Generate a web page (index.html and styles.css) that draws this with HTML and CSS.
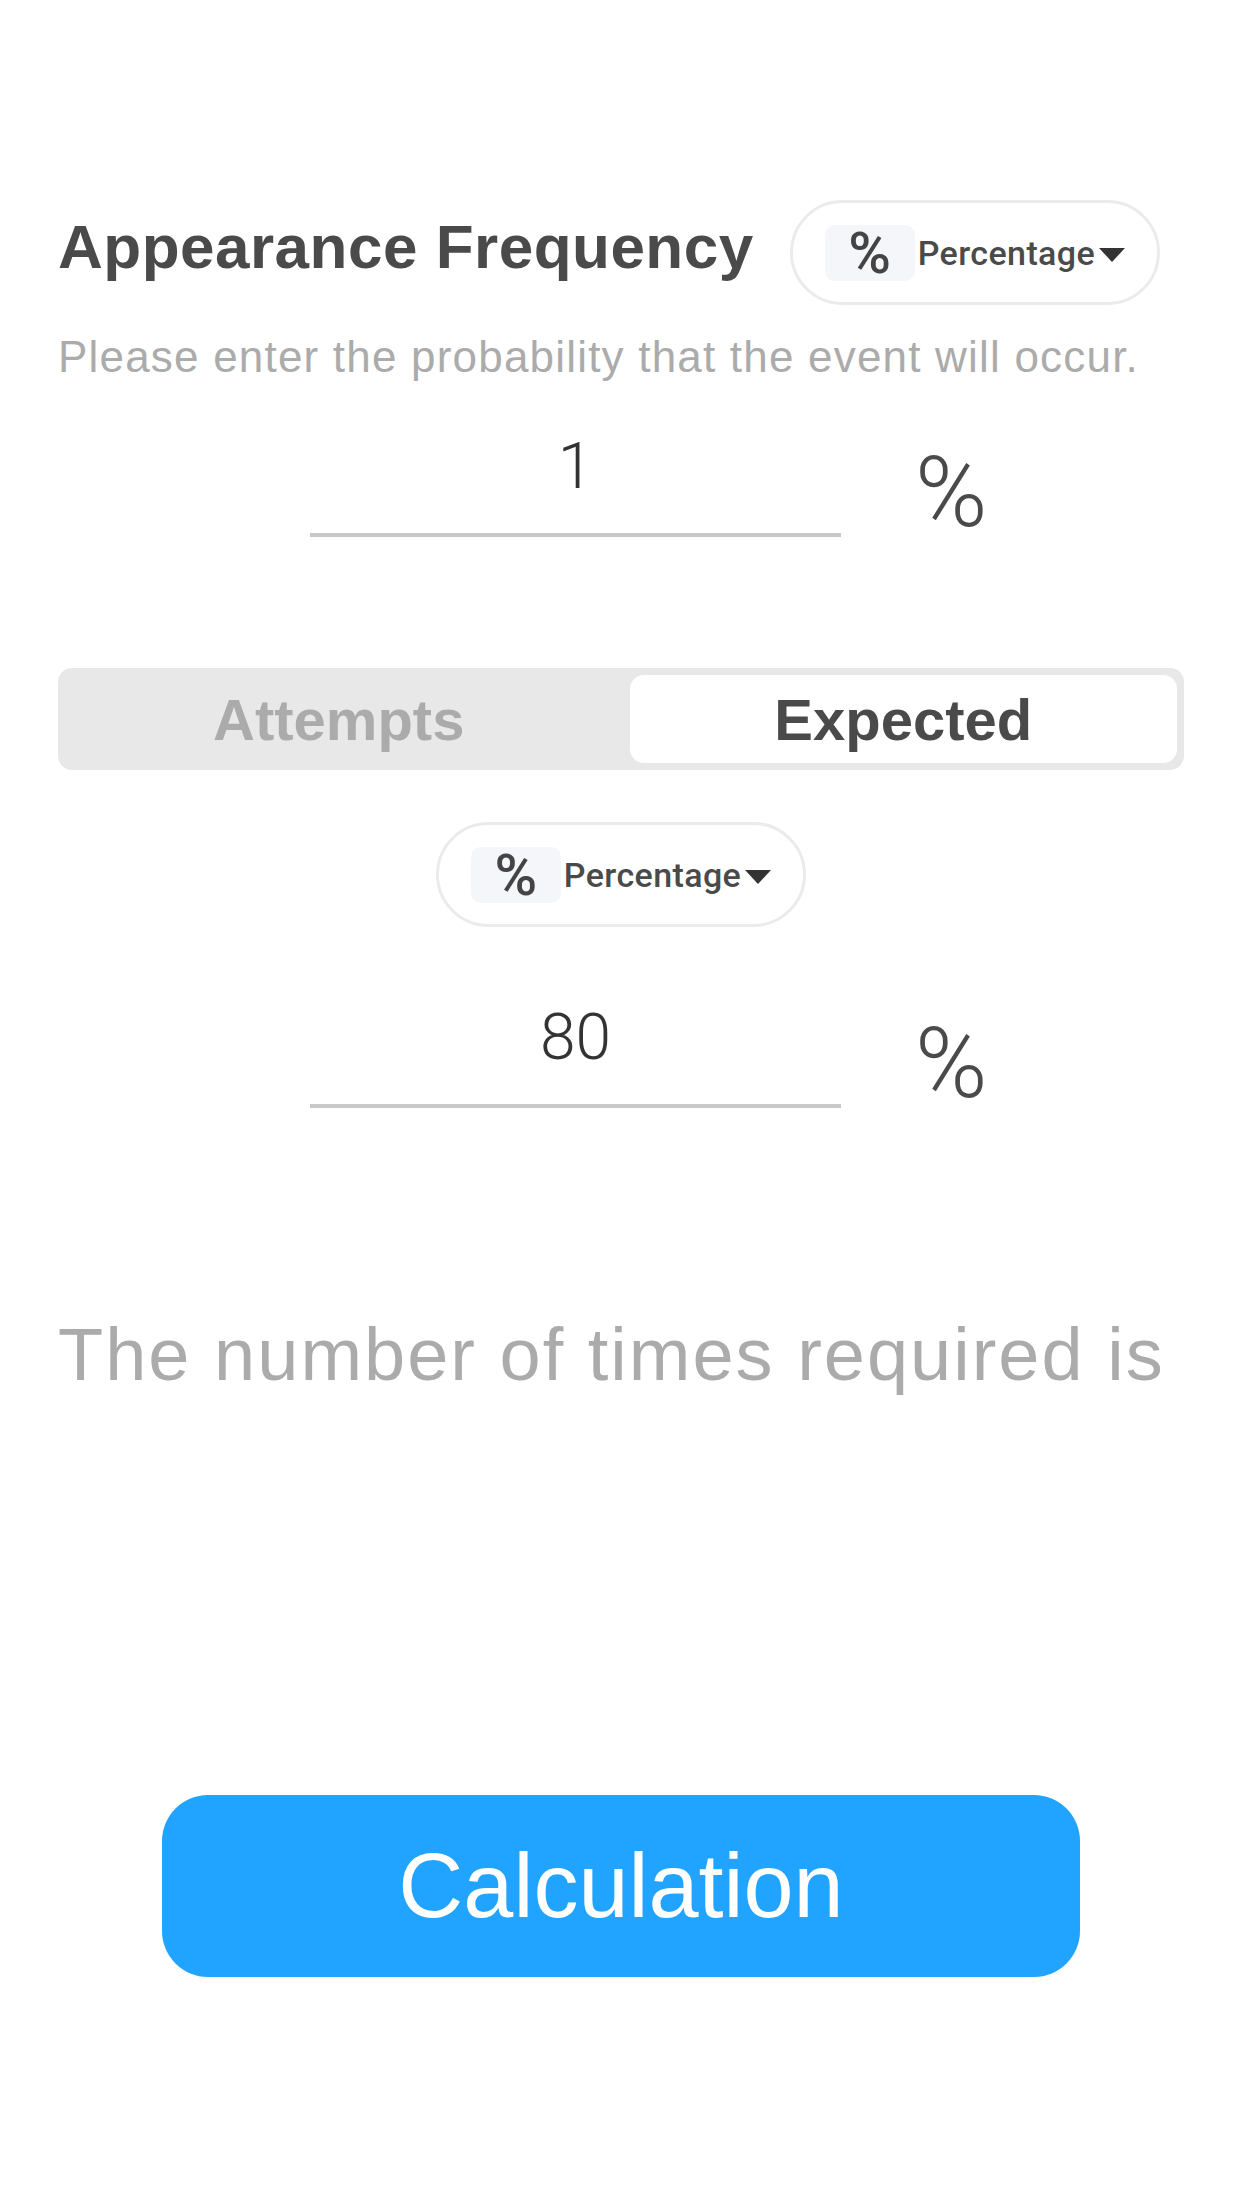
FILE: index.html
```html
<!DOCTYPE html>
<html lang="en">

<head>
    <meta charset="UTF-8" />
    <meta name="viewport" content="width=device-width, initial-scale=1.0" />
    <title>Appearance Frequency</title>
    <link rel="stylesheet" href="styles.css">
</head>

<body>
    <div class="page">
        <div class="head">
            <h2>Appearance Frequency</h2>
            <div class="pill">
                <span class="pill-icon">%</span>
                <span class="pill-label">Percentage</span>
                <span class="caret"></span>
            </div>
        </div>
        <p class="hint">Please enter the probability that the event will occur.</p>

        <div class="field">
            <input type="text" class="num" value="1" aria-label="Probability" />
            <span class="unit">%</span>
        </div>

        <div class="segmented" role="tablist">
            <button class="seg">Attempts</button>
            <button class="seg active">Expected</button>
        </div>

        <div class="pill pill-center">
            <span class="pill-icon">%</span>
            <span class="pill-label">Percentage</span>
            <span class="caret"></span>
        </div>

        <div class="field field-second">
            <input type="text" class="num" value="80" aria-label="Expected" />
            <span class="unit">%</span>
        </div>

        <p class="result">The number of times required is</p>

        <button class="calc">Calculation</button>
    </div>
</body>

</html>
```

FILE: styles.css
```css
body {
    margin: 0;
    padding: 0;
    background: #fff;
    font-family: 'Liberation Sans', Arial, sans-serif;
    color: #4a4a4a;
}

.page {
    padding: 200px 58px 0;
}

.head {
    display: flex;
    align-items: flex-start;
    gap: 36px;
}

h2 {
    margin: 16px 0 0;
    font-size: 62px;
    line-height: 1;
    font-weight: 700;
    letter-spacing: 0.5px;
    color: #4a4a4a;
}

.pill {
    display: flex;
    align-items: center;
    height: 99px;
    padding: 0 32px;
    border: 3px solid #ebebeb;
    border-radius: 60px;
    background: #fff;
}

.pill-center {
    width: fit-content;
    margin: 52px auto 0;
}

.pill-icon {
    display: flex;
    justify-content: center;
    align-items: center;
    width: 90px;
    height: 56px;
    border-radius: 10px;
    background: #f5f6fa;
    font-family: Roboto, sans-serif;
    font-weight: 500;
    font-size: 58px;
    line-height: 1;
    color: #444;
}

.pill-label {
    margin-left: 3px;
    font-family: Roboto, sans-serif;
    font-weight: 500;
    font-size: 34px;
    letter-spacing: 0.4px;
    color: #4a4a4a;
}

.caret {
    width: 0;
    height: 0;
    margin: 4px 0 0 4px;
    border-left: 13px solid transparent;
    border-right: 13px solid transparent;
    border-top: 14px solid #333;
}

.hint {
    margin: 30px 0 0;
    font-size: 44px;
    line-height: 1;
    letter-spacing: 1.2px;
    color: #ababab;
}

.field {
    display: flex;
    align-items: flex-start;
    margin: 55px 0 0 252px;
}

.field-second {
    margin-top: 78px;
}

.num {
    width: 531px;
    height: 64px;
    padding: 0 0 35px;
    margin: 0;
    border: none;
    border-bottom: 4px solid #c8c8c8;
    background: transparent;
    text-align: center;
    font-family: Roboto, sans-serif;
    font-weight: 300;
    font-size: 64px;
    color: #333;
    outline: none;
}

.unit {
    margin: 10px 0 0 74px;
    font-family: Roboto, sans-serif;
    font-weight: 300;
    font-size: 98px;
    line-height: 1;
    color: #4a4a4a;
}

.segmented {
    display: flex;
    gap: 17px;
    height: 88px;
    margin-top: 126px;
    padding: 7px;
    border-radius: 14px;
    background: #e8e8e8;
}

.seg {
    flex: 1;
    border: none;
    border-radius: 14px;
    background: transparent;
    font-family: 'Liberation Sans', Arial, sans-serif;
    font-weight: 700;
    font-size: 58px;
    color: #ababab;
    cursor: pointer;
}

.seg.active {
    background: #fff;
    color: #4a4a4a;
}

.result {
    margin: 205px 0 0;
    font-size: 74px;
    line-height: 1;
    letter-spacing: 2px;
    color: #ababab;
}

.calc {
    display: block;
    width: 918px;
    height: 182px;
    margin: 403px 0 0 104px;
    border: none;
    border-radius: 46px;
    background: #21a4ff;
    color: #fff;
    font-family: 'Liberation Sans', Arial, sans-serif;
    font-size: 90px;
    cursor: pointer;
}
```
